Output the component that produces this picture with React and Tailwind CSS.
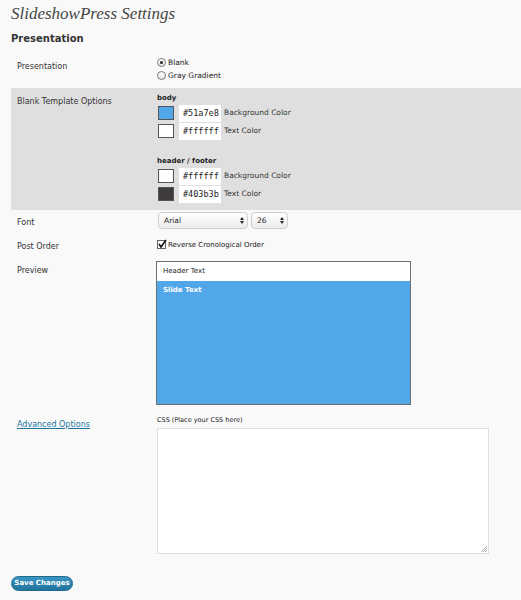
import React from "react";

const F = { fontFamily: '"DejaVu Sans", Verdana, sans-serif' };

function Radio({ checked, label }) {
  return (
    <div className="flex items-center h-[13px]">
      <span className="w-[9px] h-[9px] rounded-full border border-[#777] bg-gradient-to-b from-white to-[#e6e6e6] flex items-center justify-center">
        {checked && <span className="w-[3px] h-[3px] rounded-full bg-[#222]" />}
      </span>
      <span className="ml-[2px] text-[7.5px] text-[#222]">{label}</span>
    </div>
  );
}

function ColorRow({ color, value, label }) {
  return (
    <div className="flex items-center h-[18px]">
      <span className="ml-[1px] w-[16px] h-[14px] border border-[#555]" style={{ backgroundColor: color }} />
      <span
        className="ml-[5px] w-[42px] h-[17px] bg-white flex items-center pl-[4px] text-[8.5px] text-[#222]"
        style={{ fontFamily: '"DejaVu Sans Mono", monospace' }}
      >
        {value}
      </span>
      <span className="ml-[3px] text-[7.5px] text-[#333]">{label}</span>
    </div>
  );
}

function Select({ w, value }) {
  return (
    <div
      className="h-[17px] rounded-[4px] border border-[#cfcfcf] bg-gradient-to-b from-white to-[#ececec] flex items-center justify-between pl-[5px] pr-[3px]"
      style={{ width: w }}
    >
      <span className="text-[7.5px] text-[#222]">{value}</span>
      <span className="flex flex-col items-center leading-none text-[#222]">
        <svg width="4" height="3" viewBox="0 0 4 3"><path d="M0 3 L2 0 L4 3Z" fill="#222" /></svg>
        <svg width="4" height="3" viewBox="0 0 4 3" className="mt-[1px]"><path d="M0 0 L2 3 L4 0Z" fill="#222" /></svg>
      </span>
    </div>
  );
}

export default function App() {
  return (
    <div className="w-[521px] h-[600px] bg-[#f9f9f9] overflow-hidden" style={F}>
      <div
        className="pl-[11px] pt-[1px] h-[24px] text-[17px] italic text-[#464646]"
        style={{ fontFamily: '"Liberation Serif", Georgia, serif' }}
      >
        SlideshowPress Settings
      </div>
      <div className="pl-[11px] mt-[7px] text-[10px] font-bold text-[#333] h-[23px]">Presentation</div>

      <div className="ml-[11px]">
        {/* Presentation row */}
        <div className="flex h-[34px] pt-[2px]">
          <div className="w-[146px] pl-[6px] pt-[5px] text-[8px] text-[#333]">Presentation</div>
          <div className="flex flex-col">
            <Radio checked label="Blank" />
            <Radio label="Gray Gradient" />
          </div>
        </div>

        {/* Gray band */}
        <div className="flex bg-[#dfdfdf] h-[122px]">
          <div className="w-[146px] pl-[6px] pt-[8px] text-[8px] text-[#333]">Blank Template Options</div>
          <div className="flex flex-col pt-[5px]">
            <div className="text-[7px] font-bold text-[#222] h-[11px] leading-[11px]">body</div>
            <ColorRow color="#51a7e8" value="#51a7e8" label="Background Color" />
            <ColorRow color="#ffffff" value="#ffffff" label="Text Color" />
            <div className="mt-[16px] text-[7px] font-bold text-[#222] h-[11px] leading-[11px]">header / footer</div>
            <ColorRow color="#ffffff" value="#ffffff" label="Background Color" />
            <ColorRow color="#403b3b" value="#403b3b" label="Text Color" />
          </div>
        </div>

        {/* Font */}
        <div className="flex h-[25px] pt-[2px]">
          <div className="w-[146px] pl-[6px] pt-[5px] text-[8px] text-[#333]">Font</div>
          <div className="flex gap-[3px] ml-[1px]">
            <Select w={90} value="Arial" />
            <Select w={37} value="26" />
          </div>
        </div>

        {/* Post order */}
        <div className="flex h-[23px] pt-[5px]">
          <div className="w-[146px] pl-[6px] pt-[1px] text-[8px] text-[#333]">Post Order</div>
          <div className="flex items-start">
            <span className="w-[9px] h-[9px] border border-[#666] bg-white relative">
              <svg className="absolute -left-[1px] -top-[2px]" width="10" height="10" viewBox="0 0 10 10">
                <path d="M2 5 L4 8 L9 1" stroke="#111" strokeWidth="1.6" fill="none" />
              </svg>
            </span>
            <span className="ml-[2px] text-[7px] text-[#222] leading-[10px]">Reverse Cronological Order</span>
          </div>
        </div>

        {/* Preview */}
        <div className="flex h-[152px] pt-[3px]">
          <div className="w-[145px] pl-[6px] pt-[4px] text-[8px] text-[#333]">Preview</div>
          <div className="w-[255px] h-[144px] border border-[#6b7075] flex flex-col">
            <div className="h-[19px] bg-white flex items-center pl-[6px] text-[7px] text-[#222]">Header Text</div>
            <div className="flex-1 bg-[#51a7e8] pl-[6px] pt-[4px] text-[7px] font-bold text-white">Slide Text</div>
          </div>
        </div>

        {/* Advanced */}
        <div className="flex h-[146px]">
          <div className="w-[146px] pl-[6px] pt-[9px] text-[8px] text-[#21759b] underline">Advanced Options</div>
          <div className="flex flex-col">
            <div className="pt-[6px] h-[18px] text-[6.5px] text-[#222]">CSS (Place your CSS here)</div>
            <div className="w-[332px] h-[126px] bg-white border border-[#dfdfdf] relative">
              <svg className="absolute right-[1px] bottom-[1px]" width="6" height="6" viewBox="0 0 6 6">
                <path d="M6 0 L0 6 M6 2 L2 6 M6 4 L4 6" stroke="#999" strokeWidth="0.8" />
              </svg>
            </div>
          </div>
        </div>

        <div className="mt-[20px]">
          <button className="w-[62px] h-[15px] rounded-full bg-gradient-to-b from-[#3a95c4] to-[#21759b] border border-[#1e6a8d] text-white text-[7px] font-bold flex items-center justify-center">
            Save Changes
          </button>
        </div>
      </div>
    </div>
  );
}
